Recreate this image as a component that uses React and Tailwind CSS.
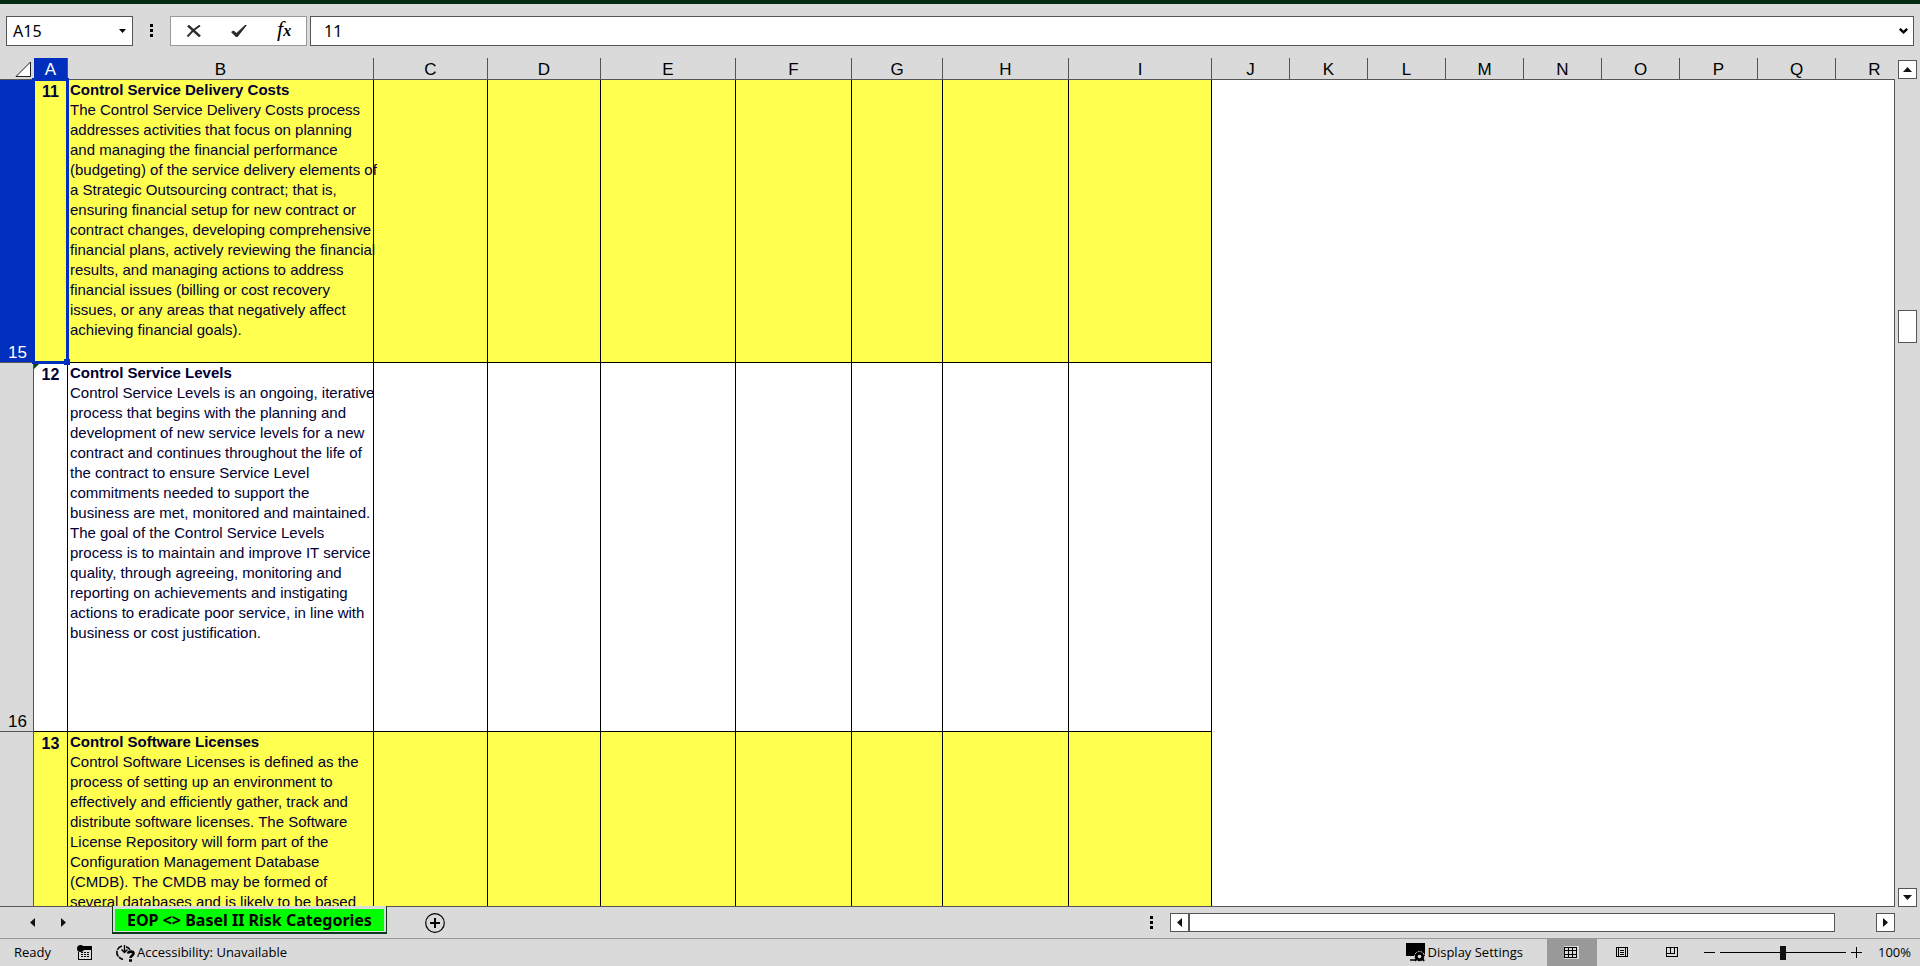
const headings = [
  { name: 'A', width: 'w-[34px]' },
  { name: 'B', width: 'w-[306px]' },
  { name: 'C', width: 'w-[114px]' },
  { name: 'D', width: 'w-[113px]' },
  { name: 'E', width: 'w-[135px]' },
  { name: 'F', width: 'w-[116px]' },
  { name: 'G', width: 'w-[91px]' },
  { name: 'H', width: 'w-[126px]' },
  { name: 'I', width: 'w-[143px]' },
  ...['J', 'K', 'L', 'M', 'N', 'O', 'P', 'Q', 'R'].map((name) => ({ name, width: 'w-[78px]' })),
]

const rows = [
  {
    label: '15',
    id: '11',
    height: 'h-[283px]',
    yellow: true,
    selected: true,
    title: 'Control Service Delivery Costs',
    lines: [
      'The Control Service Delivery Costs process',
      'addresses activities that focus on planning',
      'and managing the financial performance',
      '(budgeting) of the service delivery elements of',
      'a Strategic Outsourcing contract; that is,',
      'ensuring financial setup for new contract or',
      'contract changes, developing comprehensive',
      'financial plans, actively reviewing the financial',
      'results, and managing actions to address',
      'financial issues (billing or cost recovery',
      'issues, or any areas that negatively affect',
      'achieving financial goals).',
    ],
  },
  {
    label: '16',
    id: '12',
    height: 'h-[369px]',
    flagged: true,
    title: 'Control Service Levels',
    lines: [
      'Control Service Levels is an ongoing, iterative',
      'process that begins with the planning and',
      'development of new service levels for a new',
      'contract and continues throughout the life of',
      'the contract to ensure Service Level',
      'commitments needed to support the',
      'business are met, monitored and maintained.',
      'The goal of the Control Service Levels',
      'process is to maintain and improve IT service',
      'quality, through agreeing, monitoring and',
      'reporting on achievements and instigating',
      'actions to eradicate poor service, in line with',
      'business or cost justification.',
    ],
  },
  {
    id: '13',
    height: 'h-[369px]',
    yellow: true,
    title: 'Control Software Licenses',
    lines: [
      'Control Software Licenses is defined as the',
      'process of setting up an environment to',
      'effectively and efficiently gather, track and',
      'distribute software licenses. The Software',
      'License Repository will form part of the',
      'Configuration Management Database',
      '(CMDB). The CMDB may be formed of',
      'several databases and is likely to be based',
    ],
  },
]

function Dots() {
  return (
    <svg className="h-[14px] w-[3px] shrink-0" viewBox="0 0 3 14" shapeRendering="crispEdges" aria-hidden="true">
      <path d="M0 0h3v3H0zM0 5h3v3H0zM0 10h3v3H0z" />
    </svg>
  )
}

function Arrow({ points }) {
  return (
    <svg className="size-[9px]" viewBox="0 0 9 9" aria-hidden="true">
      <polygon points={points} fill="#111" />
    </svg>
  )
}

const UP = '0,7 4.5,2 9,7'
const DOWN = '0,2 9,2 4.5,7'
const LEFT = '7,0 7,9 2,4.5'
const RIGHT = '2,0 2,9 7,4.5'

function FormulaBar() {
  return (
    <div className="flex h-[54px] shrink-0 items-start gap-[3px] border-t-4 border-[#052b10] px-[6px] pt-3 text-base">
      <div className="flex h-[30px] w-[127px] items-center border border-[#555] bg-white pr-[6px]">
        <input aria-label="Name box" defaultValue="A15" className="w-0 grow pl-[6px] outline-none" />
        <button aria-label="Show names">
          <svg className="h-1 w-[7px]" viewBox="0 0 7 4" aria-hidden="true"><path d="M0 0h7L3.5 4z" /></svg>
        </button>
      </div>
      <div className="flex h-[30px] w-[31px] items-center justify-center"><Dots /></div>
      <div className="flex h-[30px] w-[137px] items-center justify-around border border-[#999] bg-white">
        <button aria-label="Cancel">
          <svg className="h-3 w-4" viewBox="0 0 16 12" fill="none" stroke="#2b2b2b" aria-hidden="true">
            <path d="M2 .5l12 11" strokeWidth="2.4" />
            <path d="M14 .5C9 3.5 5 7 1.5 11.5" strokeWidth="2" />
          </svg>
        </button>
        <button aria-label="Enter">
          <svg className="h-3 w-4" viewBox="0 0 16 12" fill="#2b2b2b" aria-hidden="true">
            <path d="M0 7l2.5-1.5 3 2.5L14 0h2L6.500 12H5z" />
          </svg>
        </button>
        <button aria-label="Insert function" className="font-['Liberation_Serif',serif] text-[22px] leading-5 italic">
          f<b className="text-base">x</b>
        </button>
      </div>
      <div className="flex h-[30px] grow items-center border border-[#555] bg-white pr-[5px]">
        <input aria-label="Formula" defaultValue="11" className="w-0 grow pl-[13px] outline-none" />
        <button aria-label="Expand formula bar">
          <svg className="h-[6px] w-[9px]" viewBox="0 0 9 6" fill="none" stroke="#000" strokeWidth="2.4" aria-hidden="true">
            <path d="M.8.8l3.700 3.500L8.200.8" />
          </svg>
        </button>
      </div>
    </div>
  )
}

function Sheet() {
  return (
    <div className="min-w-0 grow overflow-hidden border-b border-[#555]">
      <table className="w-[1914px] table-fixed border-separate border-spacing-0 font-['Liberation_Sans',sans-serif]">
        <colgroup>
          <col className="w-[34px]" />
          {headings.map((h) => <col key={h.name} className={h.width} />)}
        </colgroup>
        <thead>
          <tr className="h-[22px] text-[17px] leading-[19px]">
            <th className="border-b border-[#555] p-0">
              <button aria-label="Select all" className="ml-auto block pr-[3px]">
                <svg className="size-4" viewBox="0 0 16 16" aria-hidden="true"><path d="M1 15.500L15.500 1v14.500z" fill="#fff" stroke="#222" /></svg>
              </button>
            </th>
            {headings.map((h) => (
              <th
                key={h.name}
                className={`border-r border-b border-[#555] p-0 pt-[2px] font-normal ${h.name === 'A' ? 'bg-[#002fbe] text-white' : ''}`}
              >
                {h.name}
              </th>
            ))}
          </tr>
        </thead>
        <tbody>
          {rows.map((r) => {
            const fill = r.yellow ? 'bg-[#ffff50]' : 'bg-white'
            return (
              <tr key={r.id} className={r.height}>
                <th
                  className={`border-r border-b border-[#555] p-0 pr-[6px] text-right align-bottom text-[17px] leading-[19px] font-normal ${r.selected ? 'bg-[#002fbe] text-white' : ''}`}
                >
                  {r.label}
                </th>
                <td className={`relative border-r border-b border-black p-0 pt-[2px] text-center align-top text-base leading-5 font-bold text-[#000033] ${fill}`}>
                  {r.id}
                  {r.selected && (
                    <span className="absolute -inset-[2px] z-10 border-[3px] border-[#002fbe]">
                      <span className="absolute -right-[4px] -bottom-[4px] size-[6px] bg-[#002fbe]" />
                    </span>
                  )}
                  {r.flagged && (
                    <svg className="absolute top-0 left-0 size-[6px]" viewBox="0 0 6 6" aria-hidden="true"><path d="M0 0h6L0 6z" fill="#0a4a12" /></svg>
                  )}
                </td>
                <td className={`border-r border-b border-black p-0 pl-[2px] align-top text-[15px] leading-5 whitespace-nowrap text-[#000033] ${fill}`}>
                  <b>{r.title}</b>
                  {r.lines.map((line) => <div key={line}>{line}</div>)}
                </td>
                {headings.slice(2, 9).map((h) => (
                  <td key={h.name} className={`border-r border-b border-black p-0 ${fill}`} />
                ))}
                <td colSpan={9} className="bg-white p-0" />
              </tr>
            )
          })}
        </tbody>
      </table>
    </div>
  )
}

function ScrollButton({ label, points, className = '' }) {
  return (
    <button aria-label={label} className={`flex size-[19px] shrink-0 items-center justify-center border border-[#555] bg-white ${className}`}>
      <Arrow points={points} />
    </button>
  )
}

function TabBar() {
  return (
    <div className="flex h-[31px] shrink-0">
      <div className="flex w-[112px] items-center gap-[22px] pl-7">
        <button aria-label="Previous sheet"><Arrow points={LEFT} /></button>
        <button aria-label="Next sheet"><Arrow points={RIGHT} /></button>
      </div>
      <button className="relative -mt-px h-7 border-r border-b-2 border-l border-[#0b3a1a] bg-[#dadada] px-[2px] pt-[3px] pb-px">
        <span className="block h-[22px] bg-[#00ff00] px-3 text-base leading-[22px] font-bold whitespace-nowrap">
          EOP &lt;&gt; Basel II Risk Categories
        </span>
      </button>
      <button aria-label="New sheet" className="ml-[38px] self-center">
        <svg className="size-5" viewBox="0 0 20 20" fill="none" stroke="#000" aria-hidden="true">
          <circle cx="10" cy="10" r="9.3" strokeWidth="1.2" />
          <path d="M10 5v10M5 10h10" strokeWidth="2" />
        </svg>
      </button>
      <div className="ml-auto flex w-[770px] items-center">
        <Dots />
        <ScrollButton label="Scroll left" points={LEFT} className="ml-[17px]" />
        <div className="h-[19px] grow border border-[#555] bg-white" />
        <ScrollButton label="Scroll right" points={RIGHT} className="mr-[25px] ml-[41px]" />
      </div>
    </div>
  )
}

function StatusBar() {
  return (
    <footer className="flex h-7 shrink-0 items-center border-t border-[#999] pl-[14px] font-['Open_Sans',sans-serif] text-[13px]">
      <span>Ready</span>
      <svg className="ml-[26px] h-4 w-[15px]" viewBox="0 0 15 16" aria-hidden="true">
        <path d="M3 1h12v14H1V7h1v7h12V5H5z" />
        <circle cx="3.500" cy="3.500" r="3.500" />
        <path d="M4 7.500h8M4 9.500h8M4 11.500h8" stroke="#000" strokeDasharray="2 1" />
      </svg>
      <button className="ml-6 flex items-center gap-[2px]">
        <svg className="h-[18px] w-[19px]" viewBox="0 0 19 18" fill="none" stroke="#000" aria-hidden="true">
          <path d="M6 2C-1 4-1 13 7 15.500" strokeWidth="1.600" strokeDasharray="6 1" />
          <path d="M8.500 1v7M5.500 5.500l3 3 3-3M10 3c2 0 3 1 4 3" strokeWidth="1.400" />
          <path d="M12 9.500c.5-2.500 5.500-2.500 5.500 0 0 2-3 2-3 4.500M13 16.500h3" strokeWidth="2.600" />
        </svg>
        Accessibility: Unavailable
      </button>
      <button className="ml-auto flex items-center gap-[2px]">
        <svg className="size-[19px]" viewBox="0 0 19 19" aria-hidden="true">
          <path d="M0 0h19v13H0z" />
          <path d="M4 17h6" stroke="#000" strokeWidth="1.500" />
          <circle cx="13.500" cy="13.500" r="5" fill="#000" stroke="#dadada" strokeDasharray="2 1" />
          <path d="M9 18l2-3M18 18l-2-3" stroke="#000" strokeWidth="2" />
          <circle cx="13.500" cy="13.500" r="1.800" fill="#dadada" />
        </svg>
        Display Settings
      </button>
      <button aria-label="Normal view" className="ml-6 flex h-full w-[50px] items-center justify-center bg-[#999]">
        <svg className="h-[13px] w-[15px] bg-[#dadada]" viewBox="0 0 15 13" shapeRendering="crispEdges" aria-hidden="true">
          <path d="M0 1h13v1H0zM0 4h13v1H0zM0 8h13v1H0zM0 11h13v1H0zM0 1h1v11H0zM4 1h1v11H4zM8 1h1v11H8zM12 1h1v11h-1z" />
        </svg>
      </button>
      <button aria-label="Page layout" className="flex w-[50px] justify-center">
        <svg className="h-[11px] w-3" viewBox="0 0 12 11" fill="none" stroke="#000" shapeRendering="crispEdges" aria-hidden="true">
          <path d="M.5.5h11v9H.5zM2.500 1v9M9.500 1v9M4 3.500h4M4 5.500h4M4 7.500h4" />
        </svg>
      </button>
      <button aria-label="Page break preview" className="flex w-[50px] justify-center">
        <svg className="h-[11px] w-3" viewBox="0 0 12 11" fill="none" stroke="#000" shapeRendering="crispEdges" aria-hidden="true">
          <path d="M.5.5h11v9H.5zM4.500 1v5M8.500 1v5M1 6.500h8" />
        </svg>
      </button>
      <button aria-label="Zoom out" className="ml-[7px]">
        <svg className="size-[11px]" viewBox="0 0 11 11" aria-hidden="true"><path d="M0 5h11v1H0z" /></svg>
      </button>
      <input
        type="range"
        aria-label="Zoom"
        defaultValue="50"
        className="mx-[5px] h-4 w-[126px] appearance-none bg-[linear-gradient(#000,#000)] bg-[length:100%_1px] bg-center bg-no-repeat [&::-webkit-slider-thumb]:h-[14px] [&::-webkit-slider-thumb]:w-[6px] [&::-webkit-slider-thumb]:appearance-none [&::-webkit-slider-thumb]:bg-[#111]"
      />
      <button aria-label="Zoom in">
        <svg className="size-[11px]" viewBox="0 0 11 11" aria-hidden="true"><path d="M0 5h11v1H0zM5 0h1v11H5z" /></svg>
      </button>
      <button className="mr-[9px] ml-4">100%</button>
    </footer>
  )
}

export default function App() {
  return (
    <div className="flex h-screen flex-col overflow-hidden bg-[#dadada] font-['Noto_Sans',sans-serif] text-black">
      <FormulaBar />
      <main className="flex min-h-0 grow overflow-hidden pt-1">
        <Sheet />
        <div className="mt-[21px] flex w-[26px] shrink-0 flex-col items-end border-l border-[#555] pr-[3px]">
          <ScrollButton label="Scroll up" points={UP} className="-mt-[19px]" />
          <div className="mt-[231px] h-[33px] w-[19px] border border-[#555] bg-white" />
          <ScrollButton label="Scroll down" points={DOWN} className="mt-auto" />
        </div>
      </main>
      <TabBar />
      <StatusBar />
    </div>
  )
}
